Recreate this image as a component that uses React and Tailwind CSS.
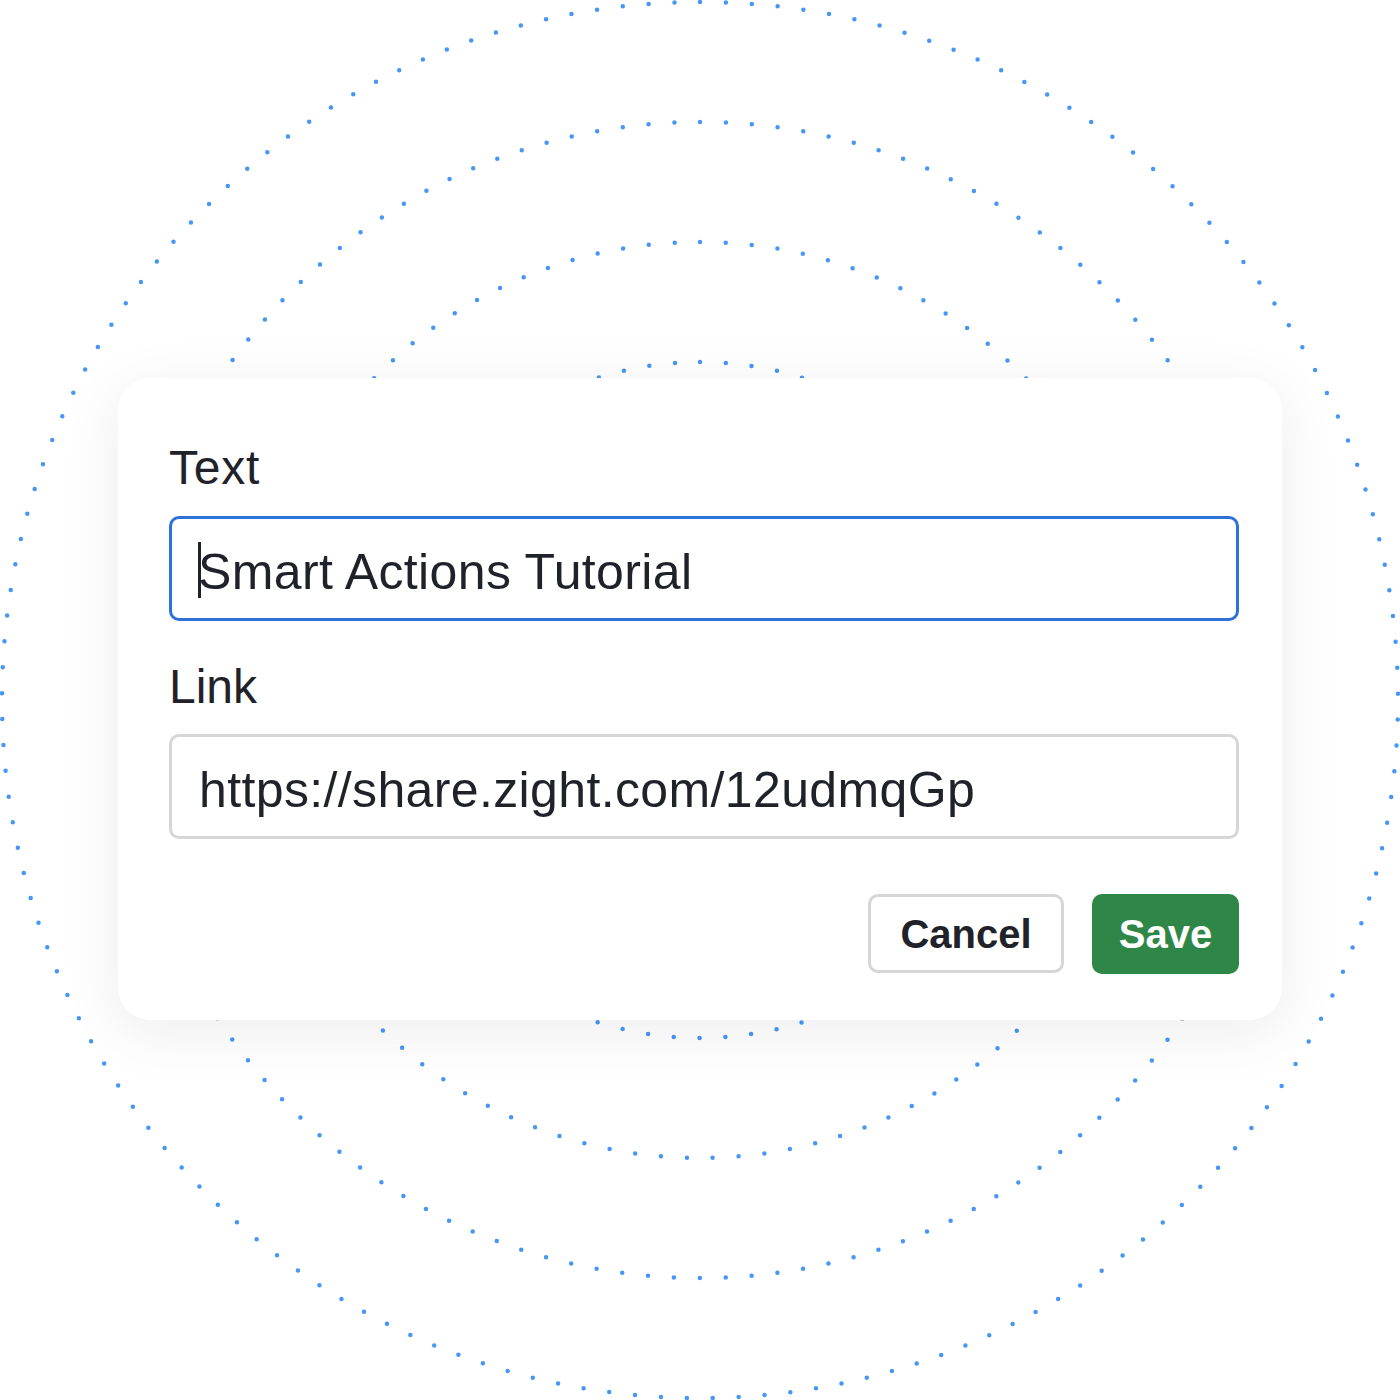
import React from "react";

const circles = [
  { r: 338, n: 82 },
  { r: 458, n: 111 },
  { r: 578, n: 140 },
  { r: 698, n: 169 },
];

function Rings() {
  return (
    <svg className="absolute inset-0" width="1400" height="1400" viewBox="0 0 1400 1400">
      {circles.map(({ r, n }) => {
        const c = 2 * Math.PI * r;
        return (
          <circle
            key={r}
            cx="700"
            cy="700"
            r={r}
            fill="none"
            stroke="#4696f6"
            strokeWidth="4.5"
            strokeLinecap="round"
            strokeDasharray={`0 ${c / n}`}
            transform="rotate(-90 700 700)"
          />
        );
      })}
    </svg>
  );
}

export default function App() {
  return (
    <div className="relative w-[1400px] h-[1400px] bg-white overflow-hidden" style={{ fontFamily: '"Liberation Sans", Arial, sans-serif' }}>
      <Rings />
      <div className="relative pt-[378px] pl-[118px]">
        <div className="w-[1164px] h-[642px] bg-white rounded-[32px] shadow-[0_12px_60px_rgba(20,30,50,0.08)] pl-[51px] pr-[43px] flex flex-col">
          <div className="text-[48px] leading-[56px] text-[#1f2329] mt-[62px] tracking-[0.8px]">Text</div>
          <div className="mt-[20px] h-[105px] rounded-[10px] border-[3px] border-[#2e72d8] flex items-center pl-[26px] relative">
            <span className="w-[3px] h-[56px] bg-[#1f2329] mr-[-3px] mt-[2px]"></span>
            <span className="text-[50px] text-[#1f2329] leading-none tracking-[0.37px] mt-[6px]">Smart Actions Tutorial</span>
          </div>
          <div className="text-[48px] leading-[56px] text-[#1f2329] mt-[38px]">Link</div>
          <div className="mt-[19px] h-[105px] rounded-[10px] border-[3px] border-[#d6d6d6] flex items-center pl-[27px]">
            <span className="text-[50px] text-[#1f2329] leading-none tracking-[0.37px] mt-[6px]">https://share.zight.com/12udmqGp</span>
          </div>
          <div className="mt-[55px] flex justify-end gap-[28px]">
            <button className="w-[196px] h-[79px] rounded-[10px] border-[3px] border-[#d6d6d6] bg-white text-[40px] font-bold text-[#1f2329]">Cancel</button>
            <button className="w-[147px] h-[80px] rounded-[10px] bg-[#2e8747] text-[40px] font-bold text-white">Save</button>
          </div>
        </div>
      </div>
    </div>
  );
}
